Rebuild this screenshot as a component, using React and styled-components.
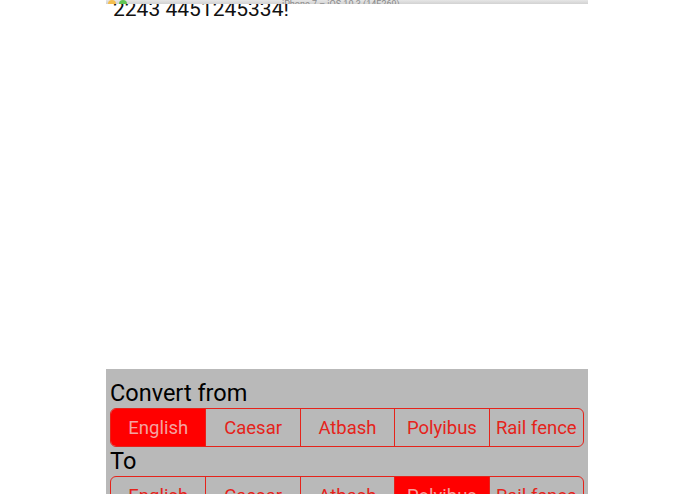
import React, { useState } from "react";
import styled, { createGlobalStyle } from "styled-components";

const Global = createGlobalStyle`
  html, body { margin: 0; padding: 0; background: #ffffff; }
  body { font-family: Roboto, "Liberation Sans", sans-serif; }
`;

const Page = styled.div`
  width: 695px;
  height: 494px;
  overflow: hidden;
  display: flex;
  justify-content: flex-start;
  padding-left: 106px;
  box-sizing: border-box;
`;

const Device = styled.div`
  width: 482px;
  height: 494px;
  display: flex;
  flex-direction: column;
  background: #ffffff;
`;

const TitleBar = styled.div`
  height: 4px;
  flex: none;
  background: linear-gradient(#e6e6e6, #d2d2d2);
  overflow: hidden;
  display: flex;
  align-items: flex-end;
  position: relative;
  z-index: 1;
`;

const Lights = styled.div`
  display: flex;
  gap: 3px;
  margin-left: 2px;
  margin-bottom: -4px;
`;

const Light = styled.span`
  width: 8px;
  height: 8px;
  border-radius: 50%;
  background: ${(p) => p.$color};
`;

const WindowTitle = styled.span`
  position: absolute;
  left: 176px;
  bottom: -5px;
  font-size: 9px;
  color: #8a8a8a;
  white-space: nowrap;
`;

const Output = styled.div`
  flex: 1;
  padding: 0 7px;
  font-size: 21px;
  line-height: 20px;
  color: #111;
  margin-top: -5px;
`;

const Panel = styled.div`
  flex: none;
  height: 125px;
  background: #b9b9b9;
  padding: 10px 4px 0;
  box-sizing: border-box;
  display: flex;
  flex-direction: column;
`;

const Label = styled.div`
  flex: none;
  font-size: 23.5px;
  line-height: 29px;
  height: 29px;
  color: #000;
`;

const Segmented = styled.div`
  display: grid;
  grid-template-columns: repeat(5, 1fr);
  height: 39px;
  flex: none;
  border: 1.5px solid #e5231b;
  border-radius: 6px;
  overflow: hidden;
  box-sizing: border-box;
`;

const Segment = styled.button`
  all: unset;
  display: flex;
  align-items: center;
  justify-content: center;
  font-family: Roboto, "Liberation Sans", sans-serif;
  font-size: 18.5px;
  color: ${(p) => (p.$active ? "#f3a3a0" : "#e5231b")};
  background: ${(p) => (p.$active ? "#ff0000" : "transparent")};
  border-left: ${(p) => (p.$first ? "none" : "1.5px solid #e5231b")};
  cursor: pointer;
`;

const CIPHERS = ["English", "Caesar", "Atbash", "Polyibus", "Rail fence"];

function CipherPicker({ value, onChange }) {
  return (
    <Segmented>
      {CIPHERS.map((name, i) => (
        <Segment
          key={name}
          $first={i === 0}
          $active={value === i}
          onClick={() => onChange(i)}
        >
          {name}
        </Segment>
      ))}
    </Segmented>
  );
}

export default function App() {
  const [from, setFrom] = useState(0);
  const [to, setTo] = useState(3);
  return (
    <>
      <Global />
      <Page>
        <Device>
          <TitleBar>
            <Lights>
              <Light $color="#f5bf4f" />
              <Light $color="#61c554" />
            </Lights>
            <WindowTitle>iPhone 7 – iOS 10.3 (14E269)</WindowTitle>
          </TitleBar>
          <Output>2243 4451245334!</Output>
          <Panel>
            <Label>Convert from</Label>
            <CipherPicker value={from} onChange={setFrom} />
            <Label>To</Label>
            <CipherPicker value={to} onChange={setTo} />
          </Panel>
        </Device>
      </Page>
    </>
  );
}
